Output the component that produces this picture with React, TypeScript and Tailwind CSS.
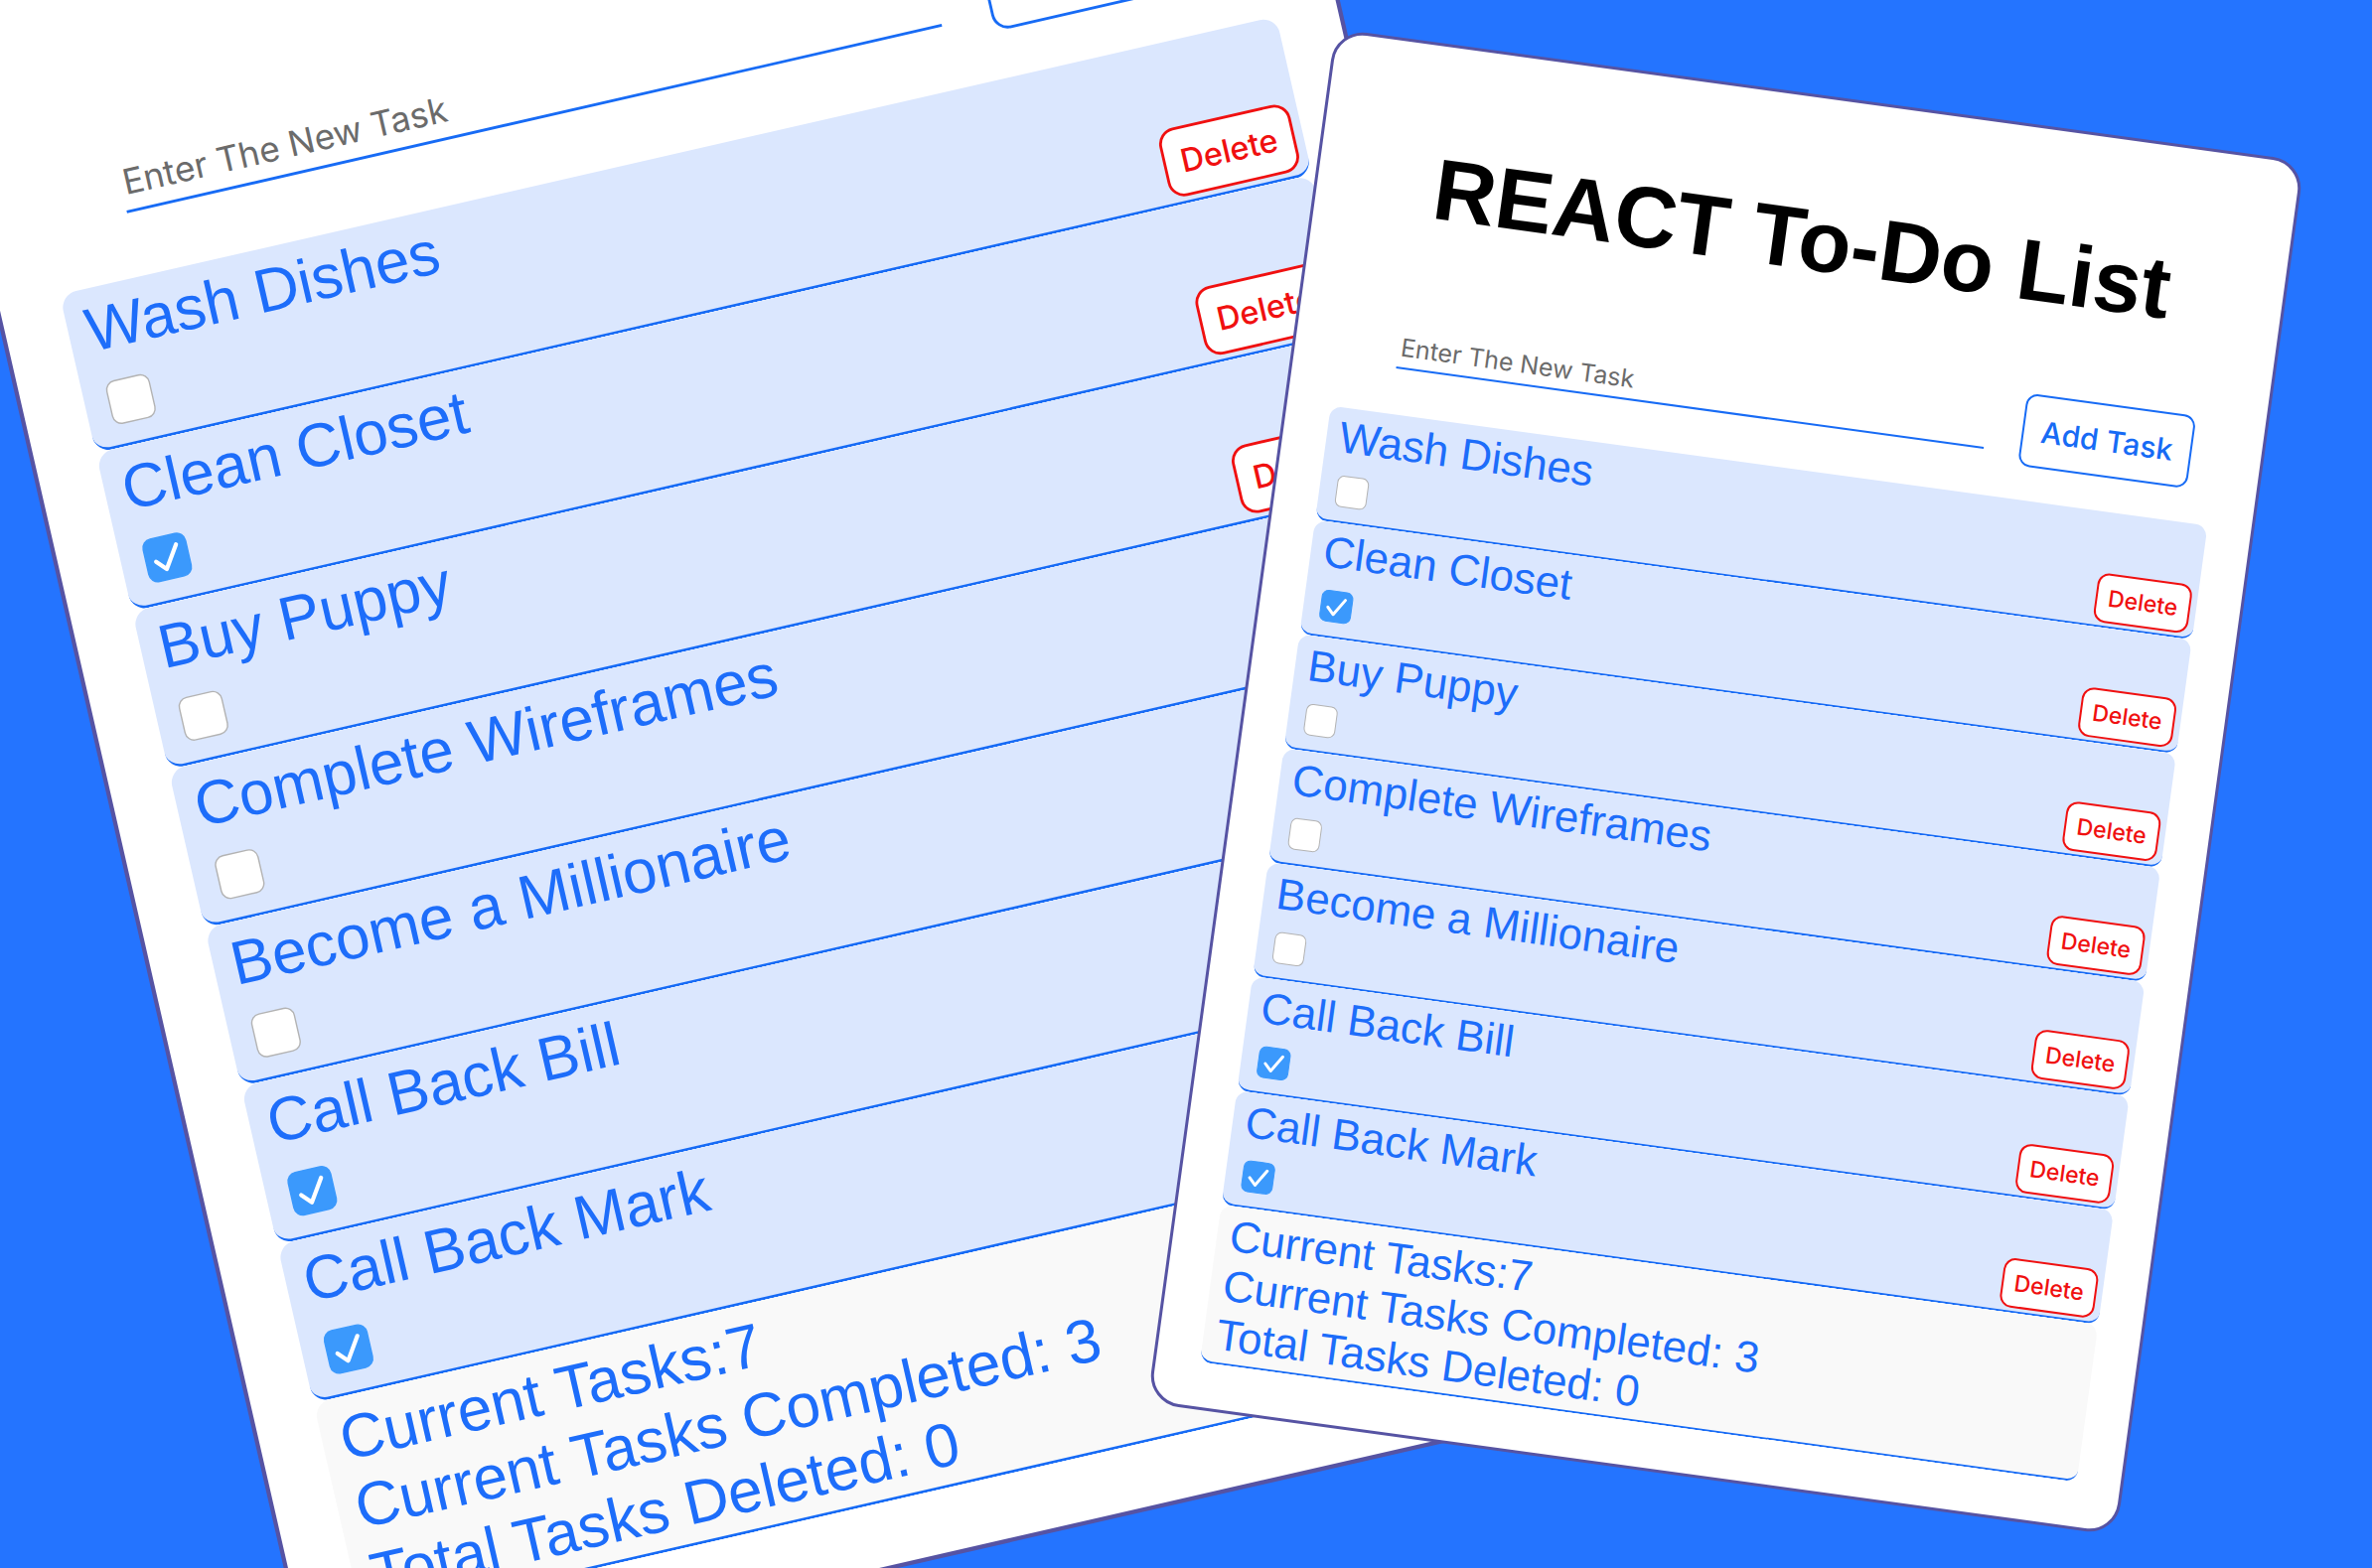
import { useId, useState } from "react";
import type { FormEvent } from "react";

type Task = { id: number; title: string; done: boolean };

const initialTasks: Task[] = [
  { id: 1, title: "Wash Dishes", done: false },
  { id: 2, title: "Clean Closet", done: true },
  { id: 3, title: "Buy Puppy", done: false },
  { id: 4, title: "Complete Wireframes", done: false },
  { id: 5, title: "Become a Millionaire", done: false },
  { id: 6, title: "Call Back Bill", done: true },
  { id: 7, title: "Call Back Mark", done: true },
];

type RowProps = { task: Task; onToggle: () => void; onDelete: () => void };

function TaskRow({ task, onToggle, onDelete }: RowProps) {
  const inputId = useId();
  return (
    <li className="flex items-end justify-between rounded-xl border-b-2 border-[#176bf5] bg-[#dbe7fe] pt-[5px] pr-1.5 pl-[13px]">
      <div className="flex flex-col pb-3.5">
        <label htmlFor={inputId} className="text-[44px] leading-[50px] text-[#1d6dfa]">
          {task.title}
        </label>
        <span className="relative mt-[13px] ml-1 size-8">
          <input
            id={inputId}
            type="checkbox"
            checked={task.done}
            onChange={onToggle}
            className="peer block size-8 appearance-none rounded-[7px] border border-[#b3b3b3] bg-white checked:border-[#3b99fc] checked:bg-[#3b99fc]"
          />
          <svg
            viewBox="0 0 32 32"
            className="pointer-events-none absolute inset-0 hidden size-8 peer-checked:block"
            fill="none"
            stroke="white"
            strokeWidth="3"
            strokeLinecap="round"
            strokeLinejoin="round"
            aria-hidden="true"
          >
            <path d="M7.6 17.3 13.9 24 24.2 8.3" />
          </svg>
        </span>
      </div>
      <button
        type="button"
        onClick={onDelete}
        className="mb-[3px] h-[50px] w-24 rounded-xl border-2 border-[#f01010] bg-white font-[Inter,sans-serif] text-[23px] leading-7 font-medium text-[#f01010]"
      >
        Delete
      </button>
    </li>
  );
}

function TodoCard({ className }: { className: string }) {
  const [tasks, setTasks] = useState(initialTasks);
  const [deleted, setDeleted] = useState(0);
  const [draft, setDraft] = useState("");

  const addTask = (event: FormEvent) => {
    event.preventDefault();
    const title = draft.trim();
    if (!title) return;
    setTasks([...tasks, { id: Date.now(), title, done: false }]);
    setDraft("");
  };
  const toggle = (id: number) =>
    setTasks(tasks.map((t) => (t.id === id ? { ...t, done: !t.done } : t)));
  const remove = (id: number) => {
    setTasks(tasks.filter((t) => t.id !== id));
    setDeleted(deleted + 1);
  };

  return (
    <section
      className={`absolute w-[985px] rounded-4xl border-3 border-[#5653a3] bg-white px-11 pt-[93px] pb-[45px] ${className}`}
    >
      <h1 className="pl-1 text-center text-[87px] leading-[100px] font-bold text-black">
        REACT To-Do List
      </h1>
      <form
        onSubmit={addTask}
        className="mt-[73px] mr-[26px] ml-[60px] flex items-center gap-9 font-[Inter,sans-serif]"
      >
        <input
          type="text"
          aria-label="New task"
          placeholder="Enter The New Task"
          value={draft}
          onChange={(e) => setDraft(e.target.value)}
          className="h-[50px] min-w-0 flex-1 border-b-2 border-[#176bf5] pt-2 pl-0.5 text-[25px] text-gray-800 outline-none placeholder:text-[#6b6b6b]"
        />
        <button
          type="submit"
          className="h-[74px] w-[172px] rounded-xl border-2 border-[#176bf5] bg-white text-[30px] font-medium text-[#176bf5]"
        >
          Add Task
        </button>
      </form>
      <ul className="mt-[34px]">
        {tasks.map((task) => (
          <TaskRow
            key={task.id}
            task={task}
            onToggle={() => toggle(task.id)}
            onDelete={() => remove(task.id)}
          />
        ))}
      </ul>
      <div className="rounded-xl border-b-2 border-[#176bf5] bg-[#f9f9f9] pt-[5px] pb-[3px] pl-[13px] text-[44px] leading-[50px] text-[#1d6dfa]">
        <p>Current Tasks:{tasks.length}</p>
        <p>Current Tasks Completed: {tasks.filter((t) => t.done).length}</p>
        <p>Total Tasks Deleted: {deleted}</p>
      </div>
    </section>
  );
}

export default function App() {
  return (
    <main className="relative h-screen w-full overflow-hidden bg-[#2474ff] font-['Liberation_Sans',Arial,sans-serif]">
      <TodoCard className="-top-[100px] left-[281px] scale-[1.41] -rotate-[12.9deg]" />
      <TodoCard className="top-[89px] left-[1245px] rotate-[7.8deg]" />
    </main>
  );
}
